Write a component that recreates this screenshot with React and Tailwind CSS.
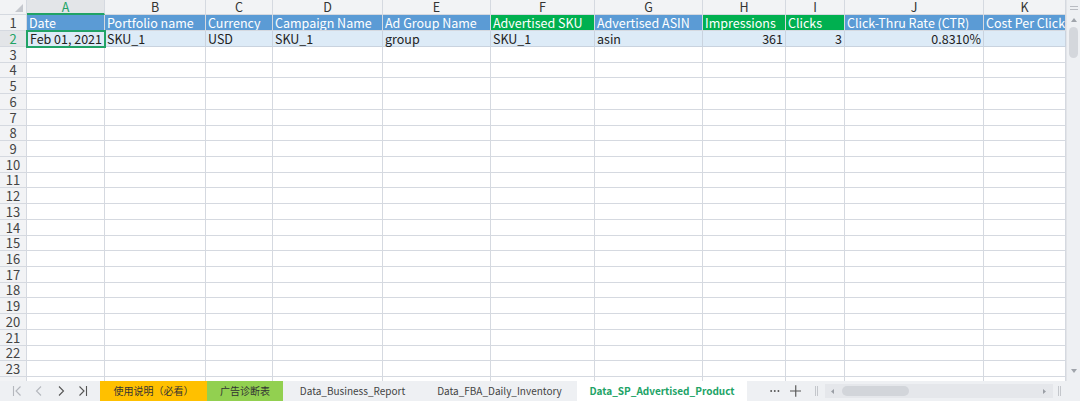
import React from "react";

const cols = [
  { l: "A", w: 78 },
  { l: "B", w: 101 },
  { l: "C", w: 67 },
  { l: "D", w: 110 },
  { l: "E", w: 108 },
  { l: "F", w: 104 },
  { l: "G", w: 108 },
  { l: "H", w: 83 },
  { l: "I", w: 59 },
  { l: "J", w: 139 },
  { l: "K", w: 82 },
];

const headers = [
  ["Date", "b"],
  ["Portfolio name", "b"],
  ["Currency", "b"],
  ["Campaign Name", "b"],
  ["Ad Group Name", "b"],
  ["Advertised SKU", "g"],
  ["Advertised ASIN", "b"],
  ["Impressions", "g"],
  ["Clicks", "g"],
  ["Click-Thru Rate (CTR)", "b"],
  ["Cost Per Click", "b"],
];

const row2 = [
  ["Feb 01, 2021", "r"],
  ["SKU_1", "l"],
  ["USD", "l"],
  ["SKU_1", "l"],
  ["group", "l"],
  ["SKU_1", "l"],
  ["asin", "l"],
  ["361", "r"],
  ["3", "r"],
  ["0.8310%", "r"],
  ["", "l"],
];

const font = { fontFamily: '"Noto Sans CJK SC", "Noto Sans", sans-serif' };

function rowHeight(i) {
  const top = Math.round(i * (330 / 21));
  const bot = Math.round((i + 1) * (330 / 21));
  return bot - top;
}

export default function App() {
  const emptyRows = [];
  for (let i = 0; i < 21; i++) emptyRows.push(i);
  return (
    <div className="w-[1080px] h-[401px] overflow-hidden bg-white relative flex flex-col" style={font}>
      <div className="flex flex-1 min-h-0">
        <div className="flex-1 flex flex-col overflow-hidden">
          {/* column header */}
          <div className="flex h-[15px] shrink-0">
            <div className="w-[27px] shrink-0 bg-[#f2f3f5] border-r border-b border-[#d5d9e0] relative">
              <svg className="absolute right-[3px] bottom-[2px]" width="8" height="8" viewBox="0 0 8 8">
                <polygon points="8,0 8,8 0,8" fill="#c5c8ce" />
              </svg>
            </div>
            {cols.map((c, i) => (
              <div
                key={c.l}
                className={
                  i === 0
                    ? "shrink-0 bg-[#e3e5e8] border-r border-[#d5d9e0] border-b-2 border-b-[#21a366] text-[#21a366] text-[12.5px] leading-[14px] flex items-center justify-center"
                    : "shrink-0 bg-[#f2f3f5] border-r border-b border-[#d5d9e0] text-[#333] text-[12.5px] leading-[14px] flex items-center justify-center"
                }
                style={{ width: c.w }}
              >
                {c.l}
              </div>
            ))}
          </div>
          {/* row 1 */}
          <div className="flex h-[16px] shrink-0">
            <div className="w-[27px] shrink-0 bg-[#f2f3f5] border-r border-b border-[#d5d9e0] text-[13px] leading-[15px] flex items-center justify-center text-[#444]">1</div>
            {cols.map((c, i) => (
              <div
                key={c.l}
                className={
                  headers[i][1] === "g"
                    ? "shrink-0 bg-[#00b050] border-r border-b border-[#d5d9e0] text-white text-[12.5px] leading-[15px] pl-[2px] whitespace-nowrap overflow-hidden flex items-center"
                    : "shrink-0 bg-[#5b9bd5] border-r border-b border-[#d5d9e0] text-white text-[12.5px] leading-[15px] pl-[2px] whitespace-nowrap overflow-hidden flex items-center"
                }
                style={{ width: c.w }}
              >
                {headers[i][0]}
              </div>
            ))}
          </div>
          {/* row 2 */}
          <div className="flex h-[16px] shrink-0 relative">
            <div className="w-[27px] shrink-0 bg-[#e3e5e8] border-r border-b border-[#d5d9e0] text-[13px] leading-[15px] flex items-center justify-center text-[#21a366]">2</div>
            {cols.map((c, i) => (
              <div
                key={c.l}
                className={
                  row2[i][1] === "r"
                    ? "shrink-0 bg-[#ddebf7] border-r border-b border-[#c9d3df] text-[#222] text-[12.5px] leading-[15px] pr-[2px] justify-end whitespace-nowrap flex items-center"
                    : "shrink-0 bg-[#ddebf7] border-r border-b border-[#c9d3df] text-[#222] text-[12.5px] leading-[15px] pl-[2px] whitespace-nowrap flex items-center"
                }
                style={{ width: c.w }}
              >
                {row2[i][0]}
              </div>
            ))}
            <div className="absolute left-[26px] top-[-1px] w-[80px] h-[18px] border-2 border-[#21a366] pointer-events-none" />
          </div>
          {emptyRows.map((r) => (
            <div key={r} className="flex shrink-0" style={{ height: rowHeight(r) }}>
              <div className="w-[27px] shrink-0 bg-[#f2f3f5] border-r border-b border-[#d5d9e0] text-[13px] leading-[14px] flex items-center justify-center text-[#444]">
                {r + 3}
              </div>
              {cols.map((c) => (
                <div key={c.l} className="shrink-0 border-r border-b border-[#d5d9e0]" style={{ width: c.w }} />
              ))}
            </div>
          ))}
          <div className="flex flex-1">
            <div className="w-[27px] shrink-0 bg-[#f2f3f5] border-r border-[#d5d9e0]" />
            {cols.map((c) => (
              <div key={c.l} className="shrink-0 border-r border-[#d5d9e0]" style={{ width: c.w }} />
            ))}
          </div>
        </div>
        {/* vertical scrollbar */}
        <div className="w-[14px] shrink-0 bg-[#eef0f3] border-l border-[#e2e4e8] flex flex-col items-center relative">
          <div className="h-[15px] w-full flex flex-col items-center justify-center gap-[2px]">
            <div className="w-[8px] h-[1px] bg-[#b9bcc2]" />
            <div className="w-[8px] h-[1px] bg-[#b9bcc2]" />
          </div>
          <svg className="mt-[3px]" width="6" height="4" viewBox="0 0 6 4">
            <polygon points="3,0 6,4 0,4" fill="#a0a4ab" />
          </svg>
          <div className="mt-[5px] w-[9px] h-[31px] rounded-[5px] bg-[#d4d7dc]" />
          <svg className="absolute bottom-[8px] left-[4px]" width="6" height="4" viewBox="0 0 6 4">
            <polygon points="0,0 6,0 3,4" fill="#a0a4ab" />
          </svg>
        </div>
      </div>
      {/* tab bar */}
      <div className="h-[20px] shrink-0 bg-[#eef0f3] flex items-stretch text-[10px] leading-[12px] text-[#333]">
        <div className="w-[100px] shrink-0 flex items-center pl-[12px] gap-[12px]">
          <svg width="10" height="12" viewBox="0 0 10 12"><path d="M1.5 1v10M8.5 1.5L4 6l4.5 4.5" stroke="#b4b7bd" strokeWidth="1.1" fill="none" /></svg>
          <svg width="10" height="12" viewBox="0 0 10 12"><path d="M7 1.5L2.5 6 7 10.5" stroke="#b4b7bd" strokeWidth="1.1" fill="none" /></svg>
          <svg width="10" height="12" viewBox="0 0 10 12"><path d="M3 1.5L7.5 6 3 10.5" stroke="#555" strokeWidth="1.1" fill="none" /></svg>
          <svg width="10" height="12" viewBox="0 0 10 12"><path d="M1.5 1.5L6 6l-4.5 4.5M8.5 1v10" stroke="#555" strokeWidth="1.1" fill="none" /></svg>
        </div>
        <div className="w-[107px] shrink-0 bg-[#ffc000] flex items-center justify-center text-[#333]">使用说明（必看）</div>
        <div className="w-[76px] shrink-0 bg-[#92d050] flex items-center justify-center text-[#333]">广告诊断表</div>
        <div className="w-[139px] shrink-0 flex items-center justify-center text-[#444]">Data_Business_Report</div>
        <div className="w-[155px] shrink-0 flex items-center justify-center text-[#444]">Data_FBA_Daily_Inventory</div>
        <div className="w-[170px] shrink-0 bg-white flex items-center justify-center text-[#21a366] font-bold">Data_SP_Advertised_Product</div>
        <div className="w-[71px] shrink-0 flex items-center pl-[23px] gap-[10px]">
          <svg width="10" height="4" viewBox="0 0 10 4">
            <circle cx="1.2" cy="2" r="1" fill="#555" />
            <circle cx="5" cy="2" r="1" fill="#555" />
            <circle cx="8.8" cy="2" r="1" fill="#555" />
          </svg>
          <svg width="12" height="12" viewBox="0 0 12 12"><path d="M6 0v12M0 6h12" stroke="#555" strokeWidth="1.2" /></svg>
          <div className="ml-[4px] w-[3px] h-[10px] border-l border-r border-[#c4c7cc]" />
        </div>
        <div className="w-[228px] shrink-0 flex items-center ml-[7px]">
          <div className="w-full h-[14px] bg-[#e5e7eb] flex items-center relative">
            <svg className="absolute left-[6px]" width="3" height="5" viewBox="0 0 3 5"><polygon points="3,0 3,5 0,2.5" fill="#9a9ea5" /></svg>
            <div className="absolute left-[17px] w-[67px] h-[10px] rounded-[5px] bg-[#d2d5da]" />
            <svg className="absolute right-[7px]" width="3" height="5" viewBox="0 0 3 5"><polygon points="0,0 3,2.5 0,5" fill="#9a9ea5" /></svg>
          </div>
        </div>
        <div className="flex items-center pl-[5px]">
          <div className="w-[3px] h-[10px] border-l border-r border-[#c4c7cc]" />
        </div>
      </div>
    </div>
  );
}
